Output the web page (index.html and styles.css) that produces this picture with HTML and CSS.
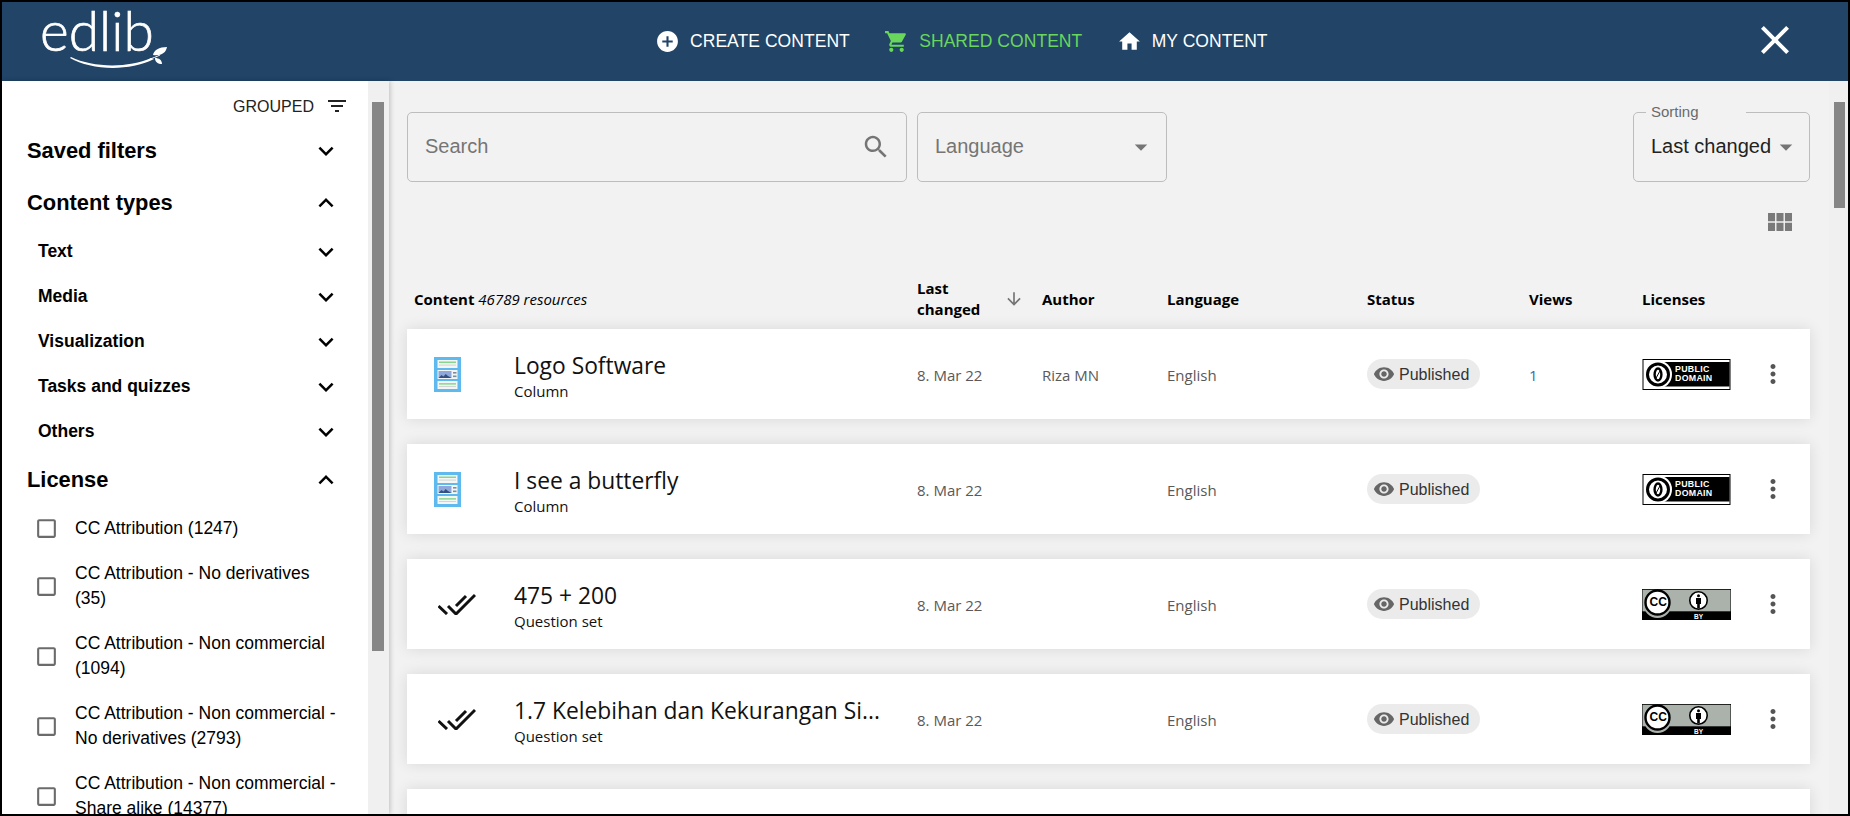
FILE: index.html
```html
<!DOCTYPE html>
<html lang="en">
<head>
<meta charset="utf-8">
<title>edlib</title>
<link rel="stylesheet" href="styles.css">
</head>
<body>
<svg class="defs" width="0" height="0" aria-hidden="true">
  <symbol id="i-plus" viewBox="0 0 24 24"><path d="M12 2C6.48 2 2 6.48 2 12s4.48 10 10 10 10-4.48 10-10S17.52 2 12 2zm5 11h-4v4h-2v-4H7v-2h4V7h2v4h4v2z"/></symbol>
  <symbol id="i-cart" viewBox="0 0 24 24"><path d="M7 18c-1.1 0-1.99.9-1.99 2S5.9 22 7 22s2-.9 2-2-.9-2-2-2zM1 2v2h2l3.6 7.59-1.35 2.45c-.16.28-.25.61-.25.96 0 1.1.9 2 2 2h12v-2H7.42c-.14 0-.25-.11-.25-.25l.03-.12.9-1.63h7.45c.75 0 1.41-.41 1.75-1.03l3.58-6.49c.08-.14.12-.31.12-.48 0-.55-.45-1-1-1H5.21l-.94-2H1zm16 16c-1.1 0-1.99.9-1.99 2s.89 2 1.99 2 2-.9 2-2-.9-2-2-2z"/></symbol>
  <symbol id="i-home" viewBox="0 0 24 24"><path d="M10 20v-6h4v6h5v-8h3L12 3 2 12h3v8z"/></symbol>
  <symbol id="i-close" viewBox="0 0 24 24"><path d="M19 6.41L17.59 5 12 10.59 6.41 5 5 6.41 10.59 12 5 17.59 6.41 19 12 13.41 17.59 19 19 17.59 13.41 12z"/></symbol>
  <symbol id="i-filter" viewBox="0 0 24 24"><path d="M10 18h4v-2h-4v2zM3 6v2h18V6H3zm3 7h12v-2H6v2z"/></symbol>
  <symbol id="i-more" viewBox="0 0 24 24"><path d="M16.59 8.59L12 13.17 7.41 8.59 6 10l6 6 6-6z"/></symbol>
  <symbol id="i-less" viewBox="0 0 24 24"><path d="M12 8l-6 6 1.41 1.41L12 10.83l4.59 4.58L18 14z"/></symbol>
  <symbol id="i-box" viewBox="0 0 24 24"><path d="M19 5v14H5V5h14m0-2H5c-1.1 0-2 .9-2 2v14c0 1.1.9 2 2 2h14c1.1 0 2-.9 2-2V5c0-1.1-.9-2-2-2z"/></symbol>
  <symbol id="i-search" viewBox="0 0 24 24"><path d="M15.5 14h-.79l-.28-.27C15.41 12.59 16 11.11 16 9.5 16 5.91 13.09 3 9.5 3S3 5.91 3 9.5 5.91 16 9.5 16c1.61 0 3.09-.59 4.23-1.57l.27.28v.79l5 4.99L20.49 19l-4.99-5zm-6 0C7.01 14 5 11.99 5 9.5S7.01 5 9.5 5 14 7.01 14 9.5 11.99 14 9.5 14z"/></symbol>
  <symbol id="i-drop" viewBox="0 0 24 24"><path d="M7 10l5 5 5-5z"/></symbol>
  <symbol id="i-module" viewBox="0 0 24 24"><path d="M4 11h5V5H4v6zm0 7h5v-6H4v6zm6 0h5v-6h-5v6zm6 0h5v-6h-5v6zm-6-7h5V5h-5v6zm6-6v6h5V5h-5z"/></symbol>
  <symbol id="i-down" viewBox="0 0 24 24"><path d="M20 12l-1.41-1.41L13 16.17V4h-2v12.17l-5.58-5.59L4 12l8 8 8-8z"/></symbol>
  <symbol id="i-eye" viewBox="0 0 24 24"><path d="M12 4.5C7 4.5 2.73 7.61 1 12c1.73 4.39 6 7.5 11 7.5s9.27-3.11 11-7.5c-1.73-4.39-6-7.5-11-7.5zM12 17c-2.76 0-5-2.24-5-5s2.24-5 5-5 5 2.24 5 5-2.24 5-5 5zm0-8c-1.66 0-3 1.34-3 3s1.34 3 3 3 3-1.34 3-3-1.34-3-3-3z"/></symbol>
  <symbol id="i-dots" viewBox="0 0 24 24"><path d="M12 8c1.1 0 2-.9 2-2s-.9-2-2-2-2 .9-2 2 .9 2 2 2zm0 2c-1.1 0-2 .9-2 2s.9 2 2 2 2-.9 2-2-.9-2-2-2zm0 6c-1.1 0-2 .9-2 2s.9 2 2 2 2-.9 2-2-.9-2-2-2z"/></symbol>
  <symbol id="i-column" viewBox="0 0 27 35">
    <rect width="27" height="35" fill="#5eb9ef"/>
    <rect x="3.5" y="3" width="20" height="8" fill="#f3f6f4"/>
    <rect x="5" y="4.6" width="17" height="1.2" fill="#6ccf73"/>
    <rect x="5" y="7.6" width="17" height="1" fill="#cfd6d2"/>
    <rect x="3.5" y="13" width="20" height="9" fill="#f3f6f4"/>
    <rect x="4.5" y="14" width="13" height="7" fill="#8fa8dc"/>
    <path d="M4.5 21l3-3 2 1.4 2.2-2.4 2.3 2 3.5 2z" fill="#33507f"/>
    <rect x="19" y="15" width="3.5" height="1.6" fill="#7d8c9c"/>
    <rect x="19" y="18.5" width="3.5" height="1.6" fill="#7d8c9c"/>
    <rect x="3.5" y="24" width="20" height="8" fill="#f3f6f4"/>
    <rect x="5" y="26.3" width="17" height="1.2" fill="#6ccf73"/>
    <rect x="5" y="29" width="17" height="1" fill="#cfd6d2"/>
  </symbol>
  <symbol id="i-check" viewBox="0 0 38 22">
    <path d="M.5 13L9 21M10 13l8 8L37 2M18 13L28 3" fill="none" stroke="#111" stroke-width="3"/>
  </symbol>
  <symbol id="i-pd" viewBox="0 0 88 31">
    <rect x=".5" y=".5" width="87" height="30" fill="#fff" stroke="#000"/>
    <rect x="20" y="3" width="67" height="24.5" fill="#000"/>
    <circle cx="15.5" cy="15.5" r="14" fill="#fff"/>
    <circle cx="15.5" cy="15.5" r="10.5" fill="#fff" stroke="#000" stroke-width="3"/>
    <ellipse cx="15.5" cy="15.5" rx="3.4" ry="6" fill="none" stroke="#000" stroke-width="2.4"/>
    <path d="M13 20l5-9" stroke="#000" stroke-width="1"/>
  </symbol>
  <symbol id="i-by" viewBox="0 0 89 31">
    <rect width="89" height="31" fill="#000"/>
    <rect x=".5" y=".8" width="88" height="21.5" fill="#aab2ab"/>
    <circle cx="15.5" cy="15" r="14" fill="#aab2ab"/>
    <circle cx="15.5" cy="13.5" r="12" fill="#fff" stroke="#000" stroke-width="2.4"/>
    <circle cx="56.5" cy="11.5" r="8.7" fill="#fff" stroke="#000" stroke-width="1.6"/>
    <circle cx="56.5" cy="6.8" r="1.5" fill="#000"/>
    <path d="M54 9h5v6h-1.2v4.5h-2.6V15H54z" fill="#000"/>
  </symbol>
</svg>

<div class="app">
  <header class="topbar">
    <a class="logo" aria-label="edlib">
      <svg class="logo-art" width="150" height="79" viewBox="0 0 150 79">
        <text class="logo-word" x="0" y="49">edlib</text>
        <path d="M31 55c22 11 58 11 80 1l3 1c-26 13-63 11-84-1z" fill="#fff"/>
        <path d="M110 57c3-1 6-2 10-4" stroke="#fff" stroke-width="1" fill="none"/>
        <path d="M113 53c1-5 6-8 14-8-1 6-6 9-14 8zM115 56c4 0 7 2 7 6-4 0-7-2-7-6z" fill="#fff"/>
      </svg>
    </a>
    <nav class="nav">
      <a class="nav-item"><svg class="nav-icon"><use href="#i-plus"/></svg>CREATE CONTENT</a>
      <a class="nav-item nav-active"><svg class="nav-icon"><use href="#i-cart"/></svg>SHARED CONTENT</a>
      <a class="nav-item"><svg class="nav-icon"><use href="#i-home"/></svg>MY CONTENT</a>
    </nav>
    <svg class="close-icon"><use href="#i-close"/></svg>
  </header>

  <div class="body">
    <aside class="sidebar">
      <div class="side-content">
        <div class="grouped">GROUPED<svg class="filter-icon"><use href="#i-filter"/></svg></div>
        <div class="sec"><span>Saved filters</span><svg class="chev"><use href="#i-more"/></svg></div>
        <div class="sec sec-types"><span>Content types</span><svg class="chev"><use href="#i-less"/></svg></div>
        <div class="sub sub-first"><span>Text</span><svg class="chev"><use href="#i-more"/></svg></div>
        <div class="sub"><span>Media</span><svg class="chev"><use href="#i-more"/></svg></div>
        <div class="sub"><span>Visualization</span><svg class="chev"><use href="#i-more"/></svg></div>
        <div class="sub"><span>Tasks and quizzes</span><svg class="chev"><use href="#i-more"/></svg></div>
        <div class="sub"><span>Others</span><svg class="chev"><use href="#i-more"/></svg></div>
        <div class="sec sec-license"><span>License</span><svg class="chev"><use href="#i-less"/></svg></div>
        <ul class="checks">
          <li class="check"><svg class="box"><use href="#i-box"/></svg><span>CC Attribution (1247)</span></li>
          <li class="check"><svg class="box"><use href="#i-box"/></svg><span>CC Attribution - No derivatives (35)</span></li>
          <li class="check"><svg class="box"><use href="#i-box"/></svg><span>CC Attribution - Non commercial (1094)</span></li>
          <li class="check"><svg class="box"><use href="#i-box"/></svg><span>CC Attribution - Non commercial - No derivatives (2793)</span></li>
          <li class="check"><svg class="box"><use href="#i-box"/></svg><span>CC Attribution - Non commercial - Share alike (14377)</span></li>
        </ul>
      </div>
      <div class="track side-track"><div class="thumb side-thumb"></div></div>
    </aside>

    <main class="main">
      <div class="main-content">
        <div class="toolbar">
          <div class="field field-search"><span class="ph">Search</span><svg class="search-icon"><use href="#i-search"/></svg></div>
          <div class="field field-lang"><span class="ph">Language</span><svg class="drop"><use href="#i-drop"/></svg></div>
          <div class="field field-sort">
            <span class="legend">Sorting</span>
            <span class="sort-value">Last changed</span><svg class="drop"><use href="#i-drop"/></svg>
          </div>
        </div>
        <div class="view-row"><svg class="module-icon" viewBox="4 5 17 13" preserveAspectRatio="none"><use href="#i-module" width="24" height="24"/></svg></div>

        <div class="grid thead">
          <div class="th-content"><b>Content</b> <i>46789 resources</i></div>
          <div class="th-sort"><b>Last changed</b><svg class="sort-arrow"><use href="#i-down"/></svg></div>
          <b>Author</b>
          <b>Language</b>
          <b>Status</b>
          <b>Views</b>
          <b>Licenses</b>
        </div>

        <div class="cards">
          <article class="grid card">
            <div class="c-icon"><svg class="ic-column"><use href="#i-column"/></svg></div>
            <div class="c-title"><div class="title">Logo Software</div><div class="type">Column</div></div>
            <div class="cell">8. Mar 22</div><div class="cell">Riza MN</div><div class="cell">English</div>
            <div><span class="chip"><svg class="eye"><use href="#i-eye"/></svg>Published</span></div>
            <div class="cell views">1</div>
            <div class="lic"><svg class="badge"><use href="#i-pd"/></svg><span class="pd-text">PUBLIC<br>DOMAIN</span></div>
            <svg class="dots"><use href="#i-dots"/></svg>
          </article>
          <article class="grid card">
            <div class="c-icon"><svg class="ic-column"><use href="#i-column"/></svg></div>
            <div class="c-title"><div class="title">I see a butterfly</div><div class="type">Column</div></div>
            <div class="cell">8. Mar 22</div><div class="cell"></div><div class="cell">English</div>
            <div><span class="chip"><svg class="eye"><use href="#i-eye"/></svg>Published</span></div>
            <div class="cell views"></div>
            <div class="lic"><svg class="badge"><use href="#i-pd"/></svg><span class="pd-text">PUBLIC<br>DOMAIN</span></div>
            <svg class="dots"><use href="#i-dots"/></svg>
          </article>
          <article class="grid card">
            <div class="c-icon"><svg class="ic-check"><use href="#i-check"/></svg></div>
            <div class="c-title"><div class="title">475 + 200</div><div class="type">Question set</div></div>
            <div class="cell">8. Mar 22</div><div class="cell"></div><div class="cell">English</div>
            <div><span class="chip"><svg class="eye"><use href="#i-eye"/></svg>Published</span></div>
            <div class="cell views"></div>
            <div class="lic"><svg class="badge"><use href="#i-by"/></svg><span class="cc-text">CC</span><span class="by-text">BY</span></div>
            <svg class="dots"><use href="#i-dots"/></svg>
          </article>
          <article class="grid card">
            <div class="c-icon"><svg class="ic-check"><use href="#i-check"/></svg></div>
            <div class="c-title"><div class="title">1.7 Kelebihan dan Kekurangan Si...</div><div class="type">Question set</div></div>
            <div class="cell">8. Mar 22</div><div class="cell"></div><div class="cell">English</div>
            <div><span class="chip"><svg class="eye"><use href="#i-eye"/></svg>Published</span></div>
            <div class="cell views"></div>
            <div class="lic"><svg class="badge"><use href="#i-by"/></svg><span class="cc-text">CC</span><span class="by-text">BY</span></div>
            <svg class="dots"><use href="#i-dots"/></svg>
          </article>
          <article class="grid card"></article>
        </div>
      </div>
      <div class="track main-track"><div class="thumb main-thumb"></div></div>
    </main>
  </div>
</div>
</body>
</html>
```

FILE: styles.css
```css
* { box-sizing: border-box; }
html, body { margin: 0; height: 100%; overflow: hidden; }
body { font-family: "Liberation Sans", Arial, sans-serif; color: #000; background: #000; }
.defs { position: absolute; }
svg { fill: currentColor; flex: none; display: block; }

.app { width: 1850px; height: 816px; border: 2px solid #000; display: flex; flex-direction: column; overflow: hidden; }

/* top bar */
.topbar { height: 79px; background: #214467; color: #fff; display: flex; align-items: center; flex: none; }
.logo { width: 653px; flex: none; padding-left: 38px; }
.logo-art { overflow: visible; }
.logo-word { font-family: Lato, sans-serif; font-weight: 300; font-size: 55px; fill: #fff; stroke: #fff; stroke-width: .7px; }
.nav { display: flex; gap: 34.4px; }
.nav-item { display: flex; align-items: center; gap: 10px; font-size: 17.5px; letter-spacing: .05px; white-space: nowrap; }
.nav-active { color: #69d65c; }
.nav-icon { width: 25px; height: 25px; }
.close-icon { width: 48px; height: 48px; margin: -3px 49px 0 auto; }

.body { flex: 1; display: flex; min-height: 0; }

/* sidebar */
.sidebar { width: 387px; flex: none; display: flex; background: #fff; box-shadow: 1px 0 5px rgba(0,0,0,.22); position: relative; }
.side-content { flex: 1; min-width: 0; padding: 0 26px 0 25px; overflow: hidden; }
.grouped { height: 50px; display: flex; align-items: center; justify-content: flex-end; gap: 11px; font-size: 16px; color: #222; padding-top: 1px; margin-right: -7px; }
.filter-icon { width: 24px; height: 24px; color: #222; margin-top: -1px; }
.sec { height: 40px; display: flex; align-items: center; justify-content: space-between; font-size: 21.875px; font-weight: 700; }
.sec-types { margin-top: 12px; }
.sec-license { margin-top: 6px; }
.sub { height: 45px; display: flex; align-items: center; justify-content: space-between; font-size: 17.5px; font-weight: 700; padding-left: 11px; }
.sub-first { margin-top: 6px; }
.chev { width: 30px; height: 30px; margin-right: 1px; }
.checks { list-style: none; margin: 6px 0 0; padding: 0 0 0 7px; }
.check { display: flex; align-items: center; gap: 16px; font-size: 17.5px; line-height: 25px; min-height: 44px; padding: 10px 0; }
.check:not(:first-child) { min-height: 70px; }
.box { width: 25px; height: 25px; color: #6b6b6b; }

.track { width: 21px; flex: none; background: #f0f0f0; }
.thumb { background: #868686; }
.side-track { padding: 21px 5px 0 4px; }
.side-thumb { height: 549px; }
.main-track { width: 19px; padding: 21px 3px 0 5px; }
.main-thumb { height: 106px; }

/* main */
.main { flex: 1; min-width: 0; display: flex; background: #f2f2f2; }
.main-content { flex: 1; min-width: 0; padding: 31px 19px 0 18px; overflow: hidden; }
.toolbar { display: flex; gap: 10px; height: 70px; }
.field { height: 70px; border: 1px solid #bdbdbd; border-radius: 5px; display: flex; align-items: center; font-size: 20px; color: #757575; position: relative; }
.ph { margin-top: -2px; }
.field-search { width: 500px; padding: 0 15px 0 17px; justify-content: space-between; }
.search-icon { width: 30px; height: 30px; color: #757575; }
.field-lang { width: 250px; padding: 0 10px 0 17px; justify-content: space-between; }
.drop { width: 30px; height: 30px; color: #757575; }
.field-sort { width: 177px; margin-left: auto; padding: 0 8px 0 17px; justify-content: space-between; color: #222; }
.legend { position: absolute; left: 12px; top: -10px; background: #f2f2f2; padding: 0 5px; font-size: 15px; line-height: 18px; color: #6a6a6a; width: 100px; }
.sort-value { white-space: nowrap; margin-top: -1px; }
.view-row { margin-top: 31px; display: flex; justify-content: flex-end; padding-right: 18px; height: 18px; }
.module-icon { width: 24px; height: 18px; color: #7a7a7a; }

.grid { display: grid; grid-template-columns: 107px 403px 125px 125px 200px 162px 113px 130px 1fr; align-items: center; }
.thead { margin-top: 42px; height: 52px; font-family: "Open Sans", sans-serif; font-size: 15px; grid-template-columns: 510px 125px 125px 200px 162px 113px 1fr; }
.thead b { font-weight: 700; }
.th-content { padding-left: 7px; }
.th-content i { font-weight: 400; }
.th-sort { display: flex; align-items: center; width: 124px; line-height: 21px; }
.th-sort b { width: 82px; }
.sort-arrow { width: 20px; height: 20px; color: #757575; margin-left: 5px; }

.cards { margin-top: 4px; display: flex; flex-direction: column; gap: 25px; }
.card { height: 90px; background: #fff; box-shadow: 0 0 14px rgba(0,0,0,.11); flex: none; }
.c-icon { padding-left: 27px; }
.ic-column { width: 27px; height: 35px; }
.ic-check { width: 38px; height: 22px; margin-left: 4px; }
.c-title { min-width: 0; padding-right: 20px; }
.title { font-family: "Open Sans", sans-serif; font-size: 22.8px; line-height: 34px; color: #111; white-space: nowrap; }
.type { font-family: "Open Sans", sans-serif; font-size: 15px; line-height: 16px; color: #111; }
.cell { font-family: "Open Sans", sans-serif; font-size: 15px; color: #595959; margin-top: 1px; }
.views { color: #3f6a99; }
.chip { display: inline-flex; align-items: center; height: 30px; width: 113px; border-radius: 15px; background: #ebebeb; font-size: 16px; color: #333; padding: 2px 0 0 6px; gap: 4px; }
.eye { width: 22px; height: 22px; color: #666; margin-top: -2px; }
.lic { position: relative; width: 89px; height: 31px; font-family: "Liberation Sans", sans-serif; font-weight: 700; }
.badge { width: 89px; height: 31px; }
.pd-text { position: absolute; left: 33px; top: 6px; color: #fff; font-size: 8.8px; line-height: 9px; letter-spacing: .3px; }
.cc-text { position: absolute; left: 7.5px; top: 7.5px; color: #000; font-size: 12px; line-height: 13px; }
.by-text { position: absolute; left: 52px; top: 24px; color: #fff; font-size: 6.5px; line-height: 7px; }
.dots { width: 30px; height: 30px; color: #555; margin-left: -14px; }
```
